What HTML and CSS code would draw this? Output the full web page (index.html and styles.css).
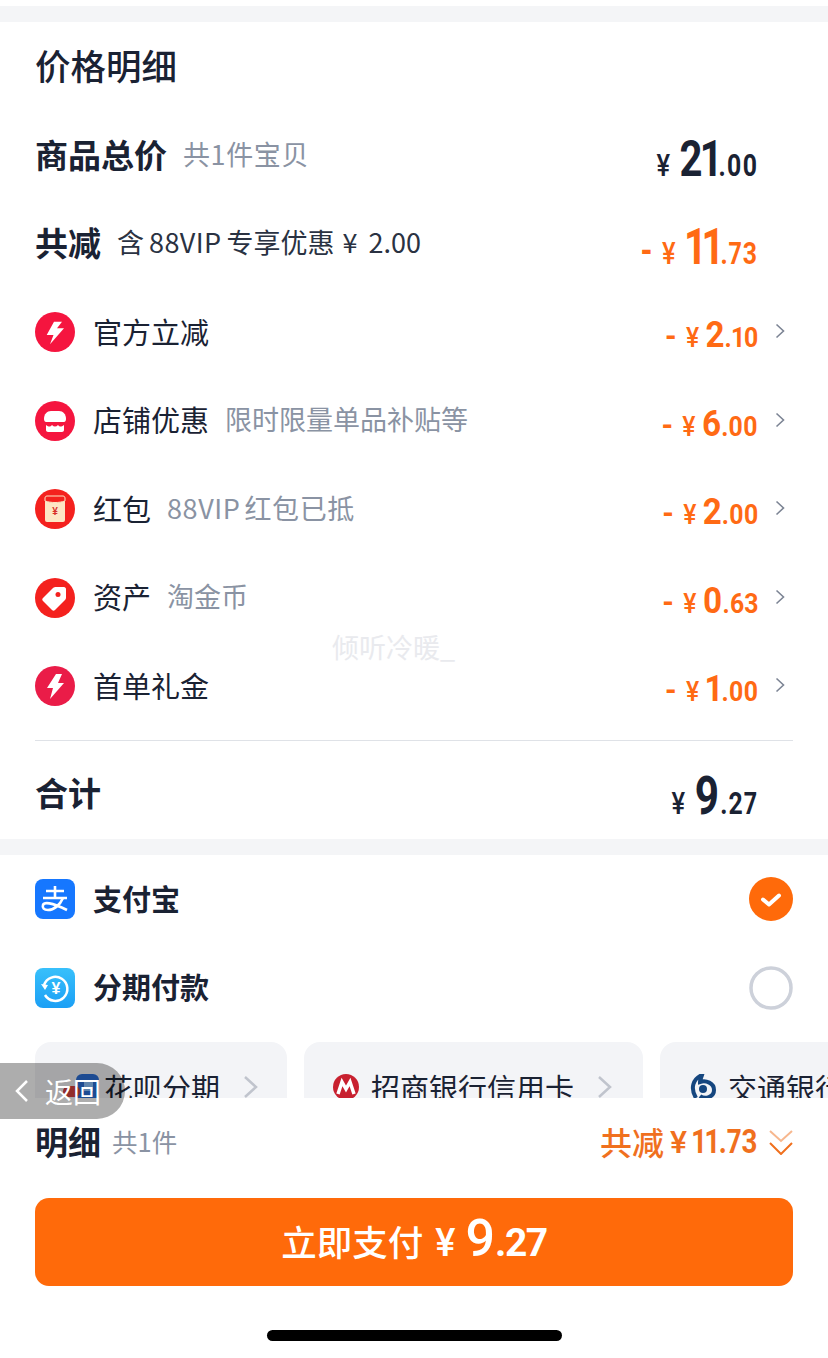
FILE: index.html
```html
<!DOCTYPE html>
<html lang="zh">
<head>
    <meta charset="UTF-8">
    <meta name="viewport" content="width=device-width, initial-scale=1.0">
    <title>价格明细</title>
    <link rel="stylesheet" href="styles.css">
</head>
<body>
    <div class="page">
        <div class="band top-band"></div>

        <!-- 价格明细 -->
        <section class="price-card">
            <h1 class="title">价格明细</h1>

            <div class="row">
                <div class="left"><span class="label-big">商品总价</span><span class="sub spaced">共1件宝贝</span></div>
                <div class="amt amt-big dark"><span class="cur">¥</span><span class="int">21</span><span class="dec">.00</span></div>
            </div>
            <div class="row">
                <div class="left"><span class="label-big">共减</span><span class="sub-dark">含<span class="latin">88VIP</span>专享优惠<span class="yen">¥</span>2.00</span></div>
                <div class="amt amt-big"><span class="sign">-</span><span class="cur">¥</span><span class="int">11</span><span class="dec">.73</span></div>
            </div>

            <div class="row">
                <div class="left">
                    <svg class="icon" viewBox="0 0 40 40"><circle cx="20" cy="20" r="20" fill="#f5153f"/><path d="M19 9.700h8L22 16.300h7L15 32.300 18.500 23h-6.800z" fill="#fff"/></svg>
                    <span class="label">官方立减</span>
                </div>
                <div class="amt"><span class="sign">-</span><span class="cur">¥</span><span class="int">2</span><span class="dec">.10</span></div>
                <svg class="chev" viewBox="0 0 10 16"><path d="M1.5 1.5 8.5 8l-7 6.5" /></svg>
            </div>
            <div class="row">
                <div class="left">
                    <svg class="icon" viewBox="0 0 40 40"><circle cx="20" cy="20" r="20" fill="#f5153f"/><path d="M9 18c0-5 3-8 7-8h8c4 0 7 3 7 8 0 2-1 3-2 3H11c-1 0-2-1-2-3z" fill="#fff"/><path d="M11 24c3 2 4 2 6 0 2 2 4 2 6 0 2 2 3 2 6 0v5c0 1-1 2-2 2H13c-1 0-2-1-2-2z" fill="#fff"/></svg>
                    <span class="label">店铺优惠</span><span class="sub">限时限量单品补贴等</span>
                </div>
                <div class="amt"><span class="sign">-</span><span class="cur">¥</span><span class="int">6</span><span class="dec">.00</span></div>
                <svg class="chev" viewBox="0 0 10 16"><path d="M1.5 1.5 8.5 8l-7 6.5" /></svg>
            </div>
            <div class="row">
                <div class="left">
                    <svg class="icon" viewBox="0 0 40 40"><circle cx="20" cy="20" r="20" fill="#f4211e"/><rect x="10" y="7" width="20" height="26" rx="2" fill="#fde6c4"/><path d="M10 9c0-1 1-2 2-2h16c1 0 2 1 2 2v3c-6 2-14 2-20 0z" fill="#f4211e" stroke="#fde6c4" stroke-width="1"/><text x="20" y="26" class="packet-yen">¥</text></svg>
                    <span class="label">红包</span><span class="sub spaced">88VIP<span class="tight">红包已抵</span></span>
                </div>
                <div class="amt"><span class="sign">-</span><span class="cur">¥</span><span class="int">2</span><span class="dec">.00</span></div>
                <svg class="chev" viewBox="0 0 10 16"><path d="M1.5 1.5 8.5 8l-7 6.5" /></svg>
            </div>
            <div class="row">
                <div class="left">
                    <svg class="icon" viewBox="0 0 40 40"><circle cx="20" cy="20" r="20" fill="#f4211e"/><path d="M21 9h8c1 0 2 1 2 2v8c0 1 0 2-1 3L20 32c-1 1-2 1-3 0l-9-9c-1-1-1-2 0-3L18 10c1-1 2-1 3-1z" fill="#fff"/><circle cx="23" cy="16.500" r="2.500" fill="#f4211e"/></svg>
                    <span class="label">资产</span><span class="sub">淘金币</span>
                </div>
                <div class="amt"><span class="sign">-</span><span class="cur">¥</span><span class="int">0</span><span class="dec">.63</span></div>
                <svg class="chev" viewBox="0 0 10 16"><path d="M1.5 1.5 8.5 8l-7 6.5" /></svg>
            </div>
            <div class="row">
                <div class="left">
                    <svg class="icon" viewBox="0 0 40 40"><circle cx="20" cy="20" r="20" fill="#ea1c48"/><path d="M21 8h6l-4 9h6L15 33l3-11h-6z" fill="#fff"/></svg>
                    <span class="label">首单礼金</span>
                </div>
                <div class="amt"><span class="sign">-</span><span class="cur">¥</span><span class="int">1</span><span class="dec">.00</span></div>
                <svg class="chev" viewBox="0 0 10 16"><path d="M1.5 1.5 8.5 8l-7 6.5" /></svg>
            </div>

            <div class="divider"></div>
            <div class="row total-row">
                <div class="left"><span class="label-big">合计</span></div>
                <div class="amt amt-big dark"><span class="cur">¥</span><span class="int">9</span><span class="dec">.27</span></div>
            </div>
        </section>

        <div class="band"></div>

        <!-- 支付方式 -->
        <section class="pay-card">
            <div class="row">
                <div class="left">
                    <svg class="icon" viewBox="0 0 40 40"><rect width="40" height="40" rx="8" fill="#1677ff"/><g fill="none" stroke="#fff" stroke-width="2.600"><path d="M11 12h18M20 7v12M8 19h24"/><path d="M28 19c-3 7-9 12-15 12-4 0-6-2-5-5 1-3 8-3 24 5"/></g></svg>
                    <span class="label-pay">支付宝</span>
                </div>
                <svg class="radio" viewBox="0 0 44 44"><circle cx="22" cy="22" r="22" fill="#ff6a0a"/><path d="M14 22.500l6 5 10-9" fill="none" stroke="#fff" stroke-width="4" stroke-linecap="round" stroke-linejoin="round"/></svg>
            </div>
            <div class="row">
                <div class="left">
                    <svg class="icon" viewBox="0 0 40 40"><defs><linearGradient id="fenqi" x1="0" y1="0" x2="0" y2="1"><stop offset="0" stop-color="#38c0fb"/><stop offset="1" stop-color="#1b9ff5"/></linearGradient></defs><rect width="40" height="40" rx="8" fill="url(#fenqi)"/><path d="M9 17a12 12 0 1 1 1 10" fill="none" stroke="#fff" stroke-width="2.500"/><path d="M6 16l7 1-3 5z" fill="#fff"/><text x="21" y="26" class="fenqi-yen">¥</text></svg>
                    <span class="label-pay">分期付款</span>
                </div>
                <svg class="radio" viewBox="0 0 44 44"><circle cx="22" cy="22" r="20" fill="#fff" stroke="#cdd1da" stroke-width="3.500"/></svg>
            </div>
            <div class="cards">
                <div class="card card-hb">
                    <svg class="card-icon" viewBox="0 0 36 30"><rect x="13" y="2" width="23" height="26" rx="6" fill="#2b6fd8"/><rect x="21" y="10" width="9" height="9" fill="#8ec5ff"/><rect x="0" y="14" width="17" height="11" rx="5.500" fill="#d8433f"/></svg>
                    <span class="card-text">花呗分期</span>
                    <svg class="card-chev" viewBox="0 0 16 24"><path d="M2 2l11 10L2 22"/></svg>
                </div>
                <div class="card card-cmb">
                    <svg class="card-icon-sm" viewBox="0 0 26 26"><circle cx="13" cy="13" r="13" fill="#c8202f"/><path d="M5 20l4-12 4 7 4-7 4 12" fill="none" stroke="#fff" stroke-width="3.500"/></svg>
                    <span class="card-text">招商银行信用卡</span>
                    <svg class="card-chev" viewBox="0 0 16 24"><path d="M2 2l11 10L2 22"/></svg>
                </div>
                <div class="card card-bcm">
                    <svg class="card-icon-sm" viewBox="0 0 26 26"><path d="M6 24C0 14 3 5 12 1c-1 3-2 5-2 7 6-2 14 1 14 8s-9 10-14 6" fill="none" stroke="#15467f" stroke-width="4"/><circle cx="13" cy="15" r="4" fill="#15467f"/></svg>
                    <span class="card-text">交通银行信用卡</span>
                </div>
            </div>
        </section>

        <!-- 底部 -->
        <footer class="bottom">
            <div class="detail-row">
                <div class="left"><span class="label-big">明细</span><span class="detail-count">共1件</span></div>
                <div class="detail-right">
                    <span class="detail-off">共减</span><span class="detail-cur">¥</span><span class="detail-num">11.73</span>
                    <svg class="double-chev" viewBox="0 0 24 26"><path d="M1 2l11 10L23 2" opacity="0.500"/><path d="M1 14l11 11 11-11"/></svg>
                </div>
            </div>
            <button class="pay-btn">立即支付<span class="btn-cur">¥</span><span class="btn-int">9</span><span class="btn-dec">.27</span></button>
            <div class="home-bar"></div>
        </footer>

        <div class="back-pill">
            <svg class="back-arrow" viewBox="0 0 14 24"><path d="M12 2 2 12l10 10"/></svg>
            <span>返回</span>
        </div>
        <div class="watermark">倾听冷暖_</div>
    </div>
</body>
</html>
```

FILE: styles.css
```css
* {
    box-sizing: border-box;
}
html, body {
    margin: 0;
    height: 100%;
    overflow: hidden;
}
body {
    background: #fff;
    font-family: "Noto Sans CJK SC", "Liberation Sans", sans-serif;
    color: #1a2233;
}
.page {
    position: relative;
    width: 828px;
    height: 1358px;
    padding-top: 6px;
    overflow: hidden;
}
.band {
    height: 16px;
    background: #f4f5f7;
}
.title {
    margin: 0;
    height: 89px;
    padding: 0 35px;
    font-size: 35.5px;
    font-weight: 500;
    line-height: 86px;
}
.row {
    display: flex;
    align-items: center;
    height: 88.5px;
    padding: 0 35px;
}
.left {
    display: flex;
    align-items: center;
    flex: 1;
    min-width: 0;
}
.label-big {
    margin-top: -3px;
    font-size: 33px;
    font-weight: 700;
    line-height: 40px;
}
.label {
    margin-top: -3px;
    margin-left: 18px;
    font-size: 29px;
    line-height: 40px;
}
.label-pay {
    margin-top: -3px;
    margin-left: 18px;
    font-size: 29px;
    font-weight: 700;
    line-height: 40px;
}
.sub {
    margin-top: -3px;
    margin-left: 16px;
    font-size: 27px;
    line-height: 40px;
    color: #8a93a3;
}
.spaced {
    letter-spacing: 0.6px;
}
.tight {
    margin-left: 4px;
}
.sub-dark {
    margin-top: -4px;
    margin-left: 16px;
    font-size: 27px;
    line-height: 40px;
    color: #2a3242;
}
.latin {
    margin: 0 5px;
    letter-spacing: 0.4px;
}
.yen {
    margin: 0 11px 0 8px;
}
.icon {
    flex: none;
    width: 40px;
    height: 40px;
}
.packet-yen {
    font-family: "Liberation Sans", sans-serif;
    font-size: 10px;
    font-weight: 700;
    fill: #d8302a;
    text-anchor: middle;
}
.fenqi-yen {
    font-family: "Liberation Sans", sans-serif;
    font-size: 16px;
    font-weight: 700;
    fill: #fff;
    text-anchor: middle;
}

/* 金额 */
.amt {
    display: flex;
    align-items: baseline;
    flex: none;
    margin-top: 9px;
    font-family: "Roboto", sans-serif;
    font-weight: 700;
    font-variant-numeric: proportional-nums;
    line-height: 40px;
    color: #ff6a14;
    transform: scaleX(0.92);
    transform-origin: right center;
}
.amt-big {
    margin-top: 14px;
    margin-right: 35px;
    line-height: 50px;
    transform: scaleX(0.8);
}
.dark {
    color: #1a2233;
}
.sign {
    margin-right: 10px;
    font-size: 32px;
    font-weight: 700;
}
.cur {
    margin-right: 7px;
    font-size: 27px;
    font-weight: 500;
}
.int {
    font-size: 36px;
}
.dec {
    font-size: 27px;
}
.amt-big .sign {
    margin-right: 12px;
    font-size: 38px;
}
.amt-big .cur {
    margin-right: 12px;
    font-size: 32px;
}
.amt-big .int {
    font-size: 50px;
    letter-spacing: -2px;
}
.amt-big .dec {
    font-size: 31px;
    letter-spacing: 1.2px;
}
.total-row .int {
    font-size: 53px;
    letter-spacing: 1px;
}
.chev {
    flex: none;
    width: 10px;
    height: 16px;
    margin-left: 17px;
    margin-right: 8px;
    margin-top: -2px;
    fill: none;
    stroke: #7c8494;
    stroke-width: 1.6;
}
.divider {
    height: 1px;
    margin: 9.5px 35px 0;
    background: #dfe2e7;
}
.row.total-row {
    height: 98px;
    padding-top: 6px;
}

/* 支付方式 */
.pay-card {
    height: 243px;
    overflow: hidden;
}
.radio {
    flex: none;
    width: 44px;
    height: 44px;
}
.cards {
    display: flex;
    gap: 17px;
    margin: 10px 0 0 35px;
}
.card {
    display: flex;
    align-items: center;
    flex: none;
    height: 90px;
    border-radius: 16px;
    background: #f3f4f7;
}
.card-hb {
    width: 252px;
    padding-left: 28px;
}
.card-cmb {
    width: 339px;
    padding-left: 29px;
}
.card-bcm {
    width: 400px;
    padding-left: 30px;
}
.card-icon {
    flex: none;
    width: 36px;
    height: 30px;
    margin-right: 5px;
}
.card-icon-sm {
    flex: none;
    width: 26px;
    height: 26px;
    margin-right: 12px;
}
.card-text {
    font-size: 29px;
    line-height: 40px;
}
.card-chev {
    flex: none;
    width: 16px;
    height: 24px;
    margin-left: 23px;
    fill: none;
    stroke: #c0c4cd;
    stroke-width: 2.5;
}

/* 底部 */
.bottom {
    position: relative;
    height: 260px;
    padding: 0 35px;
    background: #fff;
}
.detail-row {
    display: flex;
    align-items: center;
    height: 88px;
    margin-bottom: 12px;
}
.detail-count {
    margin-top: -3px;
    margin-left: 11px;
    font-size: 25.5px;
    line-height: 40px;
    color: #8a93a3;
}
.detail-right {
    display: flex;
    align-items: center;
}
.detail-off {
    margin-top: -3px;
    font-size: 32px;
    font-weight: 500;
    line-height: 40px;
    color: #f0701e;
}
.detail-cur {
    margin-left: 6px;
    font-family: "Roboto", sans-serif;
    font-size: 32px;
    font-weight: 500;
    line-height: 40px;
    color: #f0701e;
}
.detail-num {
    width: 66px;
    margin-left: 5px;
    font-family: "Roboto", sans-serif;
    font-size: 33px;
    font-weight: 700;
    font-variant-numeric: proportional-nums;
    line-height: 40px;
    white-space: nowrap;
    color: #f0701e;
    transform: scaleX(0.84);
    transform-origin: left center;
}
.double-chev {
    flex: none;
    width: 24px;
    height: 26px;
    margin-left: 11px;
    fill: none;
    stroke: #f0701e;
    stroke-width: 2;
}
.pay-btn {
    display: flex;
    align-items: baseline;
    justify-content: center;
    width: 100%;
    height: 88px;
    border: none;
    border-radius: 14px;
    padding: 13px 0 0;
    background: #ff6a0a;
    color: #fff;
    font-family: inherit;
    font-size: 35.5px;
    font-weight: 500;
    line-height: 56px;
}
.btn-cur {
    margin: 0 10px 0 12px;
    font-family: "Roboto", sans-serif;
    font-size: 38px;
}
.btn-int {
    font-family: "Roboto", sans-serif;
    font-size: 52px;
    font-weight: 500;
}
.btn-dec {
    font-family: "Roboto", sans-serif;
    font-size: 39px;
    font-weight: 700;
    letter-spacing: -1.5px;
}
.home-bar {
    width: 295px;
    height: 11px;
    margin: 44px auto 0;
    border-radius: 6px;
    background: #000;
}

/* 悬浮层 */
.back-pill {
    position: absolute;
    left: 0;
    top: 1063px;
    display: flex;
    align-items: center;
    width: 125px;
    height: 56px;
    padding-left: 15px;
    border-radius: 0 28px 28px 0;
    background: rgba(0, 0, 0, 0.32);
    color: #fff;
    font-size: 28px;
}
.back-arrow {
    flex: none;
    width: 14px;
    height: 24px;
    margin-right: 16px;
    fill: none;
    stroke: #fff;
    stroke-width: 2.5;
}
.watermark {
    position: absolute;
    left: 332px;
    top: 629px;
    font-size: 27px;
    line-height: 36px;
    color: #e9eaee;
}
```
